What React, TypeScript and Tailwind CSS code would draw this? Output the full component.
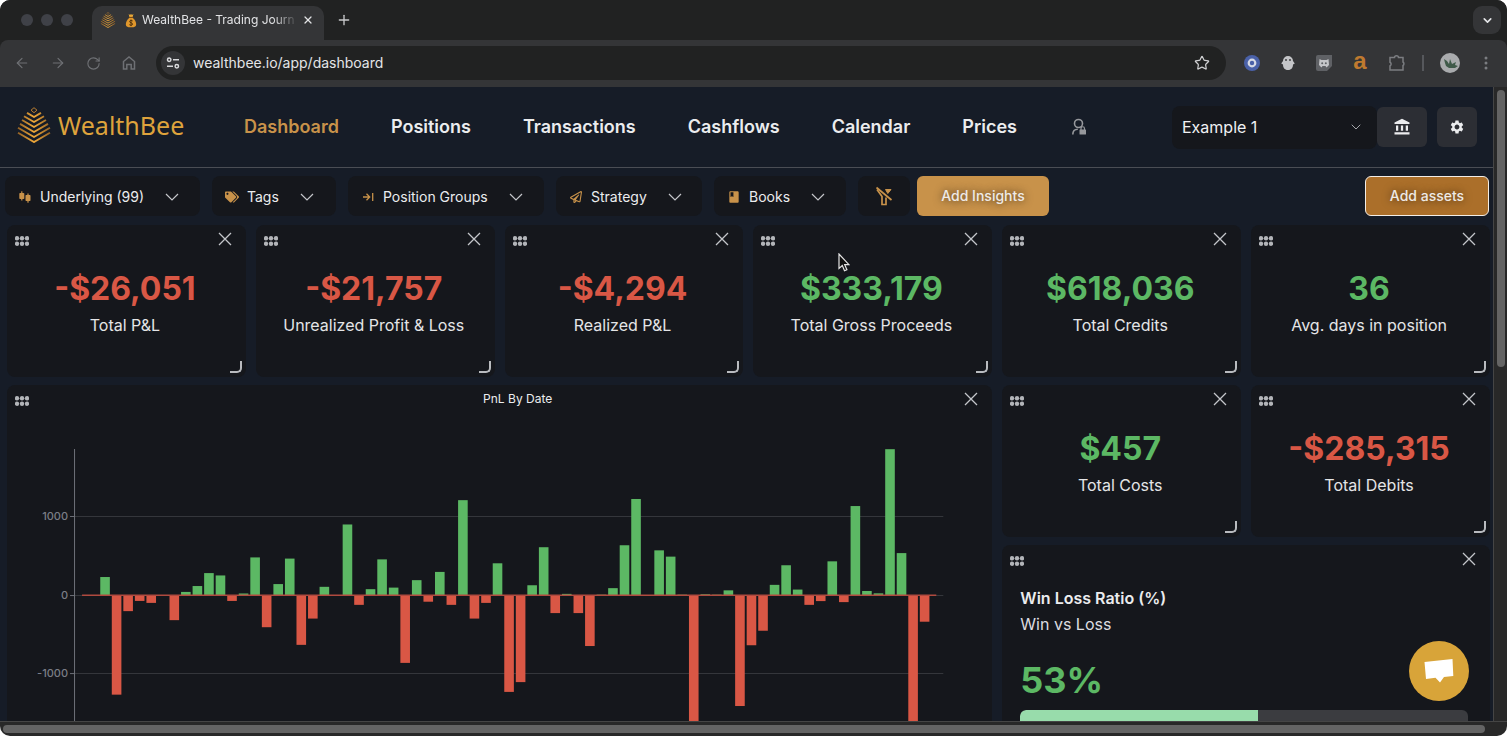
import React from "react";
import { MdAccountBalance, MdSettings, MdBook } from "react-icons/md";
import { FaTags, FaRegPaperPlane } from "react-icons/fa";
import { ArrowLeft, ArrowRight, RotateCw, Plus, X, Star, ChevronDown } from "lucide-react";

const RED = "#d95745";
const GREEN = "#5cb864";

function BeeLogo({ className }: { className?: string }) {
  const rows = [
    [7, 10],
    [10, 15],
    [12, 20],
    [14, 25],
    [16, 30],
    [16, 35],
  ];
  return (
    <svg viewBox="0 0 36 36" className={className} fill="none" aria-hidden="true">
      <defs>
        <linearGradient id="bee" x1="0" x2="36" y1="0" y2="0" gradientUnits="userSpaceOnUse">
          <stop offset="0" stopColor="#8a5a22" />
          <stop offset="0.5" stopColor="#f0a93a" />
          <stop offset="1" stopColor="#8a5a22" />
        </linearGradient>
      </defs>
      <path d="M18 0.700l3 2.500-3 2.500-3-2.500z" stroke="#b87d30" strokeWidth="1" />
      {rows.map(([w, y]) => (
        <path key={y} d={`M${18 - w} ${y - w * 0.58}L18 ${y}L${18 + w} ${y - w * 0.58}`} stroke="url(#bee)" strokeWidth="1.9" />
      ))}
    </svg>
  );
}

function MoneyBag() {
  return (
    <svg viewBox="0 0 12 16" className="h-[15px] w-3 shrink-0" aria-hidden="true">
      <path d="M3.5 1L5 2l1-1.2L7 2l1.6-1L7.7 4.4H4.3z" fill="#e8a838" />
      <path d="M4.2 5h3.6C10 7 11.5 9.5 11.5 12c0 2.300-1.500 3.300-5.500 3.300S.5 14.300.5 12C.5 9.500 2 7 4.200 5z" fill="#e0972c" />
      <path d="M4 4.700h4" stroke="#7a4a12" strokeWidth="1" />
      <path d="M7.800 8.500C7 7.700 4.500 7.700 4.500 9.200s3.200 1 3.200 2.600-2.700 1.500-3.500.600M6 7v7" stroke="#4d2f0c" strokeWidth="1" fill="none" />
    </svg>
  );
}

function CandlesIcon() {
  return (
    <svg viewBox="0 0 12 12" className="h-3 w-3" fill="#c8924a" aria-hidden="true">
      <rect x="0.300" y="2" width="5" height="6" rx="0.800" />
      <rect x="2.200" y="0.300" width="1.200" height="9.200" />
      <rect x="6.500" y="4" width="5" height="6" rx="0.800" />
      <rect x="8.400" y="2.500" width="1.200" height="9.200" />
    </svg>
  );
}

function ArrowToBar() {
  return (
    <svg viewBox="0 0 12 12" className="h-3 w-3" fill="none" stroke="#c8924a" strokeWidth="1.300" aria-hidden="true">
      <path d="M1 6h7M4.500 2.800L7.700 6 4.500 9.200M10.700 2v8" />
    </svg>
  );
}

function FilterOff() {
  return (
    <svg viewBox="0 0 18 20" className="h-5 w-[18px]" fill="none" stroke="#c8924a" strokeWidth="1.700" aria-hidden="true">
      <path d="M1.500 1.500L16.500 14" />
      <path d="M2 3.500l5 7v8h4V11.500" />
      <path d="M10.500 3.500h5.500l-3.200 4z" fill="#c8924a" strokeWidth="1" />
    </svg>
  );
}

function UserLock() {
  return (
    <svg viewBox="0 0 16 18" className="ml-0.5 h-[18px] w-4" fill="none" aria-hidden="true">
      <circle cx="7.500" cy="5.500" r="4" stroke="#96989c" strokeWidth="1.600" />
      <path d="M1.800 16.500c0-3.500 2-5.200 5-5.200" stroke="#96989c" strokeWidth="1.600" />
      <rect x="8.500" y="11.500" width="6.500" height="5" rx="0.600" fill="#96989c" />
      <path d="M10 12v-1.500a1.750 1.750 0 0 1 3.500 0V12" stroke="#96989c" strokeWidth="1.200" />
    </svg>
  );
}

function Dots() {
  return (
    <svg viewBox="0 0 14 10" className="h-[10px] w-[14px]" fill="#b3b5b9" aria-hidden="true">
      {[2, 7, 12].map((x) => (
        <React.Fragment key={x}>
          <circle cx={x} cy="2.300" r="2.200" />
          <circle cx={x} cy="7.700" r="2.200" />
        </React.Fragment>
      ))}
    </svg>
  );
}

function WideChevron() {
  return (
    <svg viewBox="0 0 14 8" className="h-2 w-[14px]" fill="none" stroke="#c4c6ca" strokeWidth="1.200" aria-hidden="true">
      <path d="M1 1l6 6 6-6" />
    </svg>
  );
}

function BrowserChrome() {
  return (
    <div className="shrink-0 bg-[#212222]">
      <div className="flex h-10 items-end pr-1">
        <div className="flex h-10 w-[92px] items-center gap-2 pl-[21px]">
          <span className="h-3 w-3 rounded-full bg-[#3f4147]" />
          <span className="h-3 w-3 rounded-full bg-[#3f4147]" />
          <span className="h-3 w-3 rounded-full bg-[#3f4147]" />
        </div>
        <div className="flex h-[34px] w-[232px] items-center rounded-t-[10px] bg-[#343537] pb-2 pl-2 pr-2.5 pt-0.5">
          <BeeLogo className="h-4 w-4 shrink-0" />
          <span className="w-[9px] shrink-0" />
          <MoneyBag />
          <span className="ml-[5px] flex-1 whitespace-nowrap text-[12px] leading-4 text-[#e2e3e5] [mask-image:linear-gradient(to_right,black_84%,transparent)]">
            WealthBee - Trading Journ
          </span>
          <button aria-label="Close tab" className="ml-1 text-[#e2e3e5]">
            <X size={12} strokeWidth={2.5} />
          </button>
        </div>
        <button aria-label="New tab" className="mb-3 ml-3 text-[#c9cacc]">
          <Plus size={16} strokeWidth={2} />
        </button>
        <button aria-label="Search tabs" className="mb-1.5 ml-auto mr-0.5 flex h-7 w-7 items-center justify-center rounded-[9px] bg-[#343537] text-[#e2e3e5]">
          <ChevronDown size={13} strokeWidth={3} />
        </button>
      </div>
      <div className="flex h-[47px] items-center rounded-t-lg bg-[#343537] pb-px pl-3.5 pr-[19px]">
        <div className="flex w-[142px] shrink-0 items-center gap-5 text-[#6e7074]">
          <button aria-label="Back"><ArrowLeft size={16} strokeWidth={1.8} /></button>
          <button aria-label="Forward"><ArrowRight size={16} strokeWidth={1.8} /></button>
          <button aria-label="Reload"><RotateCw size={15} strokeWidth={1.8} /></button>
          <button aria-label="Home">
            <svg viewBox="0 0 16 16" className="h-4 w-4" fill="none" stroke="currentColor" strokeWidth="1.500" aria-hidden="true">
              <path d="M2.500 6.500L8 2l5.500 4.500V14h-3.300V9.500H5.800V14H2.500z" />
            </svg>
          </button>
        </div>
        <div className="flex h-[34px] flex-1 items-center rounded-full bg-[#212222] pl-[5px] pr-4">
          <span className="flex h-6 w-6 items-center justify-center rounded-full bg-[#343537]">
            <svg viewBox="0 0 14 12" className="h-3 w-3.5" fill="none" stroke="#d8d9db" strokeWidth="1.500" aria-hidden="true">
              <circle cx="3.200" cy="2.800" r="1.700" />
              <path d="M7 2.800h6M1 9.200h6" />
              <circle cx="10.800" cy="9.200" r="1.700" />
            </svg>
          </span>
          <input
            aria-label="Address"
            readOnly
            value="wealthbee.io/app/dashboard"
            className="ml-2 min-w-0 flex-1 bg-transparent text-sm text-[#e4e5e7] outline-none"
          />
          <button aria-label="Bookmark" className="text-[#d0d1d3]"><Star size={16} strokeWidth={1.8} /></button>
        </div>
        <div className="ml-[18px] flex shrink-0 items-center gap-5">
          <svg viewBox="0 0 16 16" className="h-4 w-4" aria-hidden="true">
            <circle cx="8" cy="8" r="8" fill="#4a61a8" />
            <circle cx="8" cy="8" r="3.300" fill="none" stroke="#d6dae6" strokeWidth="2.200" />
          </svg>
          <svg viewBox="0 0 16 16" className="h-4 w-4" fill="#c4c5c8" aria-hidden="true">
            <path d="M3 6a5 5 0 0 1 10 0l1.800 2.500L13 9.500c0 3-1.500 5.500-5 5.500s-5-2.500-5-5.500L1.200 8.500z" />
            <circle cx="6" cy="5" r="0.900" fill="#343537" />
            <circle cx="10" cy="5" r="0.900" fill="#343537" />
          </svg>
          <svg viewBox="0 0 16 16" className="h-4 w-4" aria-hidden="true">
            <path d="M0 2a2 2 0 0 1 2-2h14v11l-5 5H2a2 2 0 0 1-2-2z" fill="#5f6165" />
            <path d="M3.500 4l2 1h5l2-1 .500 6-2.500 2.500-1-1.500h-3l-1 1.500L3 10z" fill="#c4c5c8" />
            <circle cx="6.200" cy="8.200" r="1" fill="#5f6165" />
            <circle cx="9.800" cy="8.200" r="1" fill="#5f6165" />
          </svg>
          <span className="w-4 pb-1 text-center font-['Liberation_Sans',sans-serif] text-[24px] font-bold leading-5 text-[#bf7a2f]">a</span>
          <svg viewBox="0 0 18 18" className="h-[18px] w-[18px]" fill="none" stroke="#7b7d81" strokeWidth="1.500" aria-hidden="true">
            <path d="M2 3.500h4.500a2 1.800 0 0 1 4 0H15V8a1.800 2 0 0 1 0 3.500v4.500H2v-4.200a2 2 0 0 0 0-3.600z" />
          </svg>
          <span className="-ml-1 h-4 w-0.5 bg-[#56585c]" />
          <svg viewBox="0 0 20 20" className="-ml-1 h-5 w-5" aria-hidden="true">
            <circle cx="10" cy="10" r="10" fill="#a9abad" />
            <path d="M4 6l3 2 2 3 1-5 2 5 4-2-1 3 3 1-3 2H9l-3-2-1-3z" fill="#3f5a49" />
          </svg>
          <svg viewBox="0 0 4 16" className="ml-1 h-4 w-1" fill="#7b7d81" aria-hidden="true">
            <circle cx="2" cy="3" r="1.500" />
            <circle cx="2" cy="8" r="1.500" />
            <circle cx="2" cy="13" r="1.500" />
          </svg>
        </div>
      </div>
    </div>
  );
}

const NAV = ["Dashboard", "Positions", "Transactions", "Cashflows", "Calendar", "Prices"];

function Header() {
  return (
    <header className="flex h-[81px] items-center border-b border-[#4a4d54] pl-4 pr-4">
      <a href="#home" className="flex w-[228px] shrink-0 items-center gap-1.5 pb-1">
        <BeeLogo className="h-9 w-9" />
        <span className="font-['Noto_Sans',sans-serif] text-[25px] leading-8 text-[#dea33c]">WealthBee</span>
      </a>
      <nav className="flex items-center gap-[52px] text-lg font-semibold text-[#ebecee]">
        {NAV.map((n) => (
          <a key={n} href={"#" + n.toLowerCase()} className={n === "Dashboard" ? "text-[#c8924a]" : ""}>
            {n}
          </a>
        ))}
        <a href="#account" aria-label="Account"><UserLock /></a>
      </nav>
      <div className="ml-auto flex items-center">
        <div className="relative flex w-[205px] items-center rounded-lg bg-[#15171c]">
          <select aria-label="Portfolio" className="h-[43px] w-full appearance-none bg-transparent pl-2.5 text-base text-[#f0f1f3] outline-none">
            <option>Example 1</option>
          </select>
          <ChevronDown size={16} strokeWidth={1.5} className="pointer-events-none absolute right-[13px] text-[#a5a7ab]" />
        </div>
        <button aria-label="Accounts" className="flex h-10 w-[50px] items-center justify-center rounded-md bg-[#2c2e34] text-[#ebecee]">
          <MdAccountBalance size={18} />
        </button>
        <button aria-label="Settings" className="ml-2.5 flex h-10 w-10 items-center justify-center rounded-md bg-[#2c2e34] text-[#ebecee]">
          <MdSettings size={16} />
        </button>
      </div>
    </header>
  );
}

function Filter({ icon, label, className }: { icon: React.ReactNode; label: string; className: string }) {
  return (
    <button
      aria-haspopup="listbox"
      className={"flex h-10 items-center rounded-lg bg-[#15171c] pl-3 pt-px text-sm text-[#ebecee] " + className}
    >
      <span className="flex w-4 items-center justify-center">{icon}</span>
      <span className="ml-[7px]">{label}</span>
      <span className="ml-[21px]">
        <WideChevron />
      </span>
    </button>
  );
}

function Filters() {
  return (
    <div className="flex items-center pb-[9px] pl-[5px] pr-1 pt-2">
      <div className="flex items-center gap-3">
        <Filter className="w-[195px]" icon={<CandlesIcon />} label="Underlying (99)" />
        <Filter className="w-[124px]" icon={<FaTags size={14} color="#c8924a" />} label="Tags" />
        <Filter className="w-[196px]" icon={<ArrowToBar />} label="Position Groups" />
        <Filter className="w-[146px]" icon={<FaRegPaperPlane size={12} color="#c8924a" />} label="Strategy" />
        <Filter className="w-[132px]" icon={<MdBook size={14} color="#c8924a" />} label="Books" />
        <button aria-label="Clear filters" className="flex h-10 w-[52px] items-center justify-center rounded-lg bg-[#15171c]">
          <FilterOff />
        </button>
      </div>
      <button className="ml-[7px] h-10 w-[132px] rounded-md bg-[#c8924a] text-sm font-medium text-[#eeeae6] [text-shadow:0_0_8px_rgba(0,0,0,0.7)]">
        Add Insights
      </button>
      <button className="ml-auto h-10 w-[124px] rounded-md border border-[#f3ede6] bg-[#ab6f2a] text-sm font-medium text-[#eeeae6] [text-shadow:0_0_8px_rgba(0,0,0,0.6)]">
        Add assets
      </button>
    </div>
  );
}

function Card({ title, className = "", resizable = false, children }: { title?: string; className?: string; resizable?: boolean; children: React.ReactNode }) {
  return (
    <section className={"relative flex flex-col rounded-lg bg-[#15171c] " + className}>
      <div className="flex h-7 items-center justify-between pl-2 pr-3.5">
        <button aria-label="Move" className="pt-1"><Dots /></button>
        {title && <h2 className="pl-[42px] text-xs text-[#ebecee]">{title}</h2>}
        <button aria-label="Remove">
          <svg viewBox="0 0 14 14" className="h-3.5 w-3.5" stroke="#c4c6ca" strokeWidth="1.300" aria-hidden="true">
            <path d="M1 1l12 12M13 1L1 13" />
          </svg>
        </button>
      </div>
      {children}
      {resizable && <span className="absolute bottom-1 right-1 h-3 w-3 rounded-br-[5px] border-b-2 border-r-2 border-[#b9bbbf]" />}
    </section>
  );
}

function Stat({ value, label }: { value: string; label: string }) {
  const good = !value.startsWith("-");
  return (
    <Card resizable>
      <div className="flex flex-col items-center pr-[3px] pt-4">
        <div className={"text-[32px] font-bold leading-10 " + (good ? "text-[#5cb864]" : "text-[#d95745]")}>{value}</div>
        <div className="mt-1 text-base text-[#e4e5e7]">{label}</div>
      </div>
    </Card>
  );
}

const PNL = [
  230, -1270, -205, -75, -100, 0, -320, 40, 115, 280, 250, -75, 20, 480, -410, 140, 465, -635, -300, 105,
  0, 900, -125, 75, 455, 95, -865, 190, -85, 295, -125, 1210, -300, -100, 405, -1235, -1110, 125, 610, -230,
  15, -230, -650, 5, 88, 635, 1225, -12, 570, 490, 5, -1800, 10, 5, 60, -1415, -640, -455, 130, 380,
  70, -125, -77, 430, -90, 1135, 52, 22, 1860, 535, -2000, -340,
];

function PnlChart() {
  const zero = 182;
  const unit = 78.4 / 1000;
  return (
    <svg viewBox="0 0 985 420" className="w-full" role="img" aria-label="PnL by date">
      {[1000, 0, -1000].map((t) => {
        const y = Math.floor(zero - t * unit) + 0.5;
        return (
          <g key={t}>
            <path d={`M68 ${y}H936`} stroke="#34363b" />
            <path d={`M63 ${y}H68`} stroke="#6e7179" />
            <text x="61" y={y + 3.5} textAnchor="end" fontSize="11" fontWeight="500" fill="#7b7e86">{t}</text>
          </g>
        );
      })}
      <path d="M67.500 36V420" stroke="#6e7179" />
      {PNL.map((v, i) => {
        const h = Math.abs(v) * unit;
        return <rect key={i} x={93.2 + i * 11.54} y={v > 0 ? zero - h : zero} width="9.600" height={h} fill={v > 0 ? GREEN : RED} />;
      })}
      <path d={`M75 ${zero + 0.2}H929`} stroke="#b04a3f" strokeWidth="1.400" />
    </svg>
  );
}

function WinLoss() {
  return (
    <Card className="col-span-2 row-span-2">
      <div className="flex flex-col pl-[18px] pr-[22px] pt-[13px]">
        <h2 className="text-base font-semibold text-[#ebecee]">Win Loss Ratio (%)</h2>
        <p className="mt-0.5 text-base text-[#dcdde0]">Win vs Loss</p>
        <div className="mt-5 text-[36px] font-bold leading-[48px] text-[#5cb864]">53%</div>
        <div className="mt-1.5 h-5 overflow-hidden rounded-md bg-[#3b3c40]">
          <div className="h-full rounded-l-md bg-[#98dcab]" style={{ width: "53%" }} />
        </div>
      </div>
    </Card>
  );
}

export default function App() {
  return (
    <div className="relative flex h-screen flex-col overflow-hidden rounded-[10px] bg-[#282828] font-['Inter','Liberation_Sans',sans-serif]">
      <BrowserChrome />
      <div className="flex min-h-0 flex-1">
        <main className="relative min-w-0 flex-1 overflow-hidden bg-[#161c27]">
          <Header />
          <Filters />
          <div className="grid auto-rows-[152px] grid-cols-6 gap-x-2.5 gap-y-2 pl-[7px] pr-[3px]">
            <Stat value="-$26,051" label="Total P&L" />
            <Stat value="-$21,757" label="Unrealized Profit & Loss" />
            <Stat value="-$4,294" label="Realized P&L" />
            <Stat value="$333,179" label="Total Gross Proceeds" />
            <Stat value="$618,036" label="Total Credits" />
            <Stat value="36" label="Avg. days in position" />
            <Card title="PnL By Date" className="col-span-4 row-span-3">
              <PnlChart />
            </Card>
            <Stat value="$457" label="Total Costs" />
            <Stat value="-$285,315" label="Total Debits" />
            <WinLoss />
          </div>
          <button aria-label="Open chat" className="absolute bottom-5 right-6 flex h-[60px] w-[60px] items-center justify-center rounded-full bg-[#d8a439]">
            <svg viewBox="0 0 30 26" className="h-[26px] w-[30px]" fill="#fff" aria-hidden="true">
              <path d="M.5 4L28.500 1l.800 17-9.300 1-4 5.500-4.500-4.800L2 21z" />
            </svg>
          </button>
          <svg viewBox="0 0 12 19" className="absolute left-[838px] top-[166px] h-[19px] w-3" aria-hidden="true">
            <path d="M1 1v14.500l3.300-3 2.200 5.200 2.400-1-2.200-5h4.300z" fill="#111" stroke="#e6e6e6" strokeWidth="1.200" />
          </svg>
        </main>
        <div className="flex w-3.5 justify-center border-l border-[#454545] pt-[3px]">
          <div className="h-[277px] w-2 rounded-full bg-[#646464]" />
        </div>
      </div>
      <div className="flex h-[15px] shrink-0 items-center border-t border-[#454545] pl-[3px] pr-[22px]">
        <div className="h-2 flex-1 rounded-full bg-[#646464]" />
      </div>
    </div>
  );
}
